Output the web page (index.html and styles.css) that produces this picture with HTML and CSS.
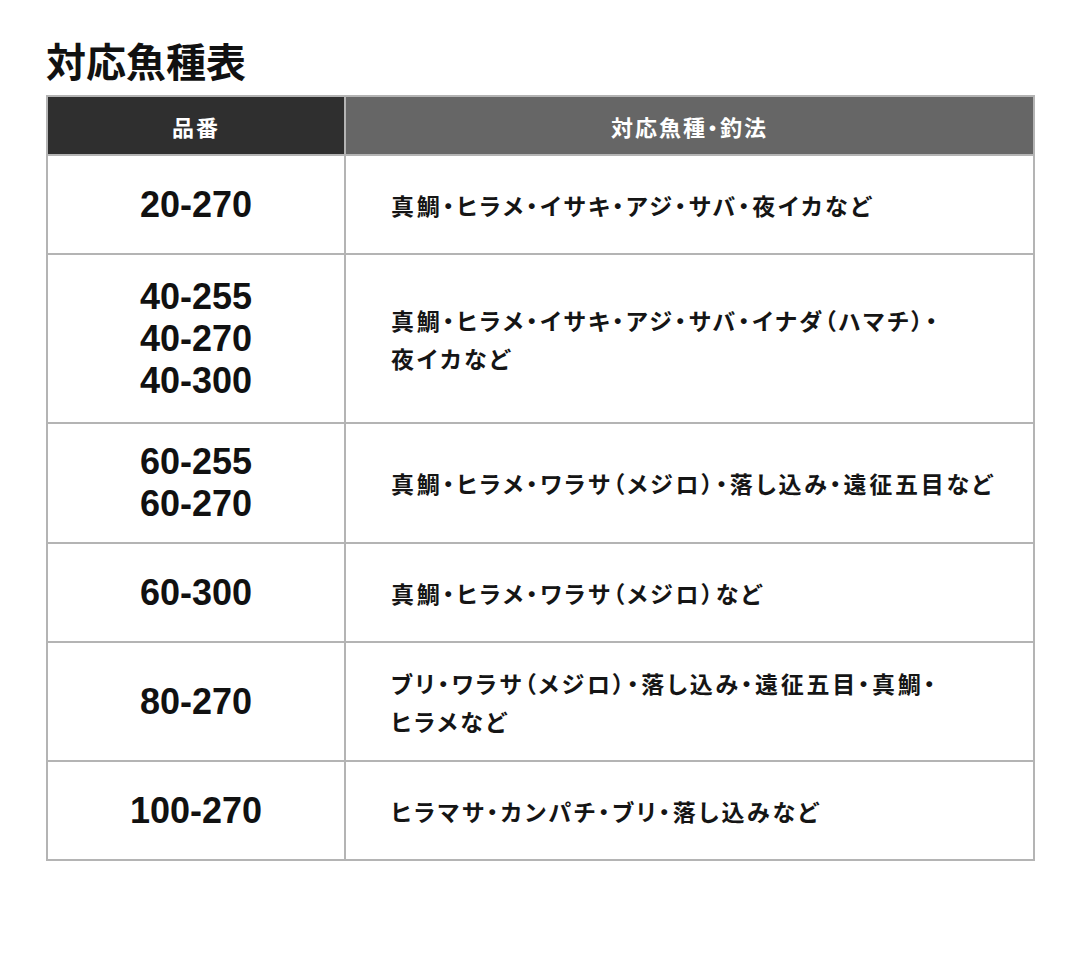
FILE: index.html
```html
<!DOCTYPE html>
<html lang="ja">
<head>
<meta charset="utf-8">
<title>対応魚種表</title>
<link rel="stylesheet" href="styles.css">
</head>
<body>
<main class="page">
  <h1 class="title">対応魚種表</h1>
  <table class="spec">
    <thead>
      <tr>
        <th class="h-model">品番</th>
        <th class="h-fish">対応魚種・釣法</th>
      </tr>
    </thead>
    <tbody>
      <tr>
        <td class="model">20-270</td>
        <td class="fish">真鯛・ヒラメ・イサキ・アジ・サバ・夜イカなど</td>
      </tr>
      <tr>
        <td class="model">40-255<br>40-270<br>40-300</td>
        <td class="fish">真鯛・ヒラメ・イサキ・アジ・サバ・イナダ（ハマチ）・<br>夜イカなど</td>
      </tr>
      <tr class="row-compact">
        <td class="model">60-255<br>60-270</td>
        <td class="fish">真鯛・ヒラメ・ワラサ（メジロ）・落し込み・遠征五目など</td>
      </tr>
      <tr>
        <td class="model">60-300</td>
        <td class="fish">真鯛・ヒラメ・ワラサ（メジロ）など</td>
      </tr>
      <tr>
        <td class="model">80-270</td>
        <td class="fish">ブリ・ワラサ（メジロ）・落し込み・遠征五目・真鯛・<br>ヒラメなど</td>
      </tr>
      <tr>
        <td class="model">100-270</td>
        <td class="fish">ヒラマサ・カンパチ・ブリ・落し込みなど</td>
      </tr>
    </tbody>
  </table>
</main>
</body>
</html>
```

FILE: styles.css
```css
html, body {
  margin: 0;
  padding: 0;
  background: #ffffff;
}

body {
  font-family: "Noto Sans CJK JP", "Noto Sans", sans-serif;
  color: #111111;
}

.page {
  padding: 34px 45px 0 46px;
}

.title {
  margin: 0 0 9px 0;
  font-size: 40px;
  line-height: 52px;
  font-weight: 700;
  color: #111111;
}

.spec {
  width: 100%;
  border-collapse: collapse;
  table-layout: fixed;
}

.spec th,
.spec td {
  border: 2px solid #b4b4b4;
}

.spec th {
  height: 57px;
  padding: 0;
  color: #ffffff;
  font-size: 22px;
  font-weight: 700;
  text-align: center;
  vertical-align: middle;
  font-feature-settings: "palt";
  letter-spacing: 2px;
}

.h-model {
  width: 296px;
  background: #2f2f2f;
}

.h-fish {
  background: #666666;
}

.spec td {
  height: 56px;
  padding: 21px 0 20px;
  vertical-align: middle;
}

.spec .row-compact td {
  padding-top: 17px;
  padding-bottom: 17px;
}

.model {
  text-align: center;
  font-family: "Liberation Sans", "Noto Sans CJK JP", sans-serif;
  font-weight: 700;
  font-size: 36px;
  line-height: 42px;
  color: #111111;
}

.spec .fish {
  padding-left: 45px;
  font-size: 23px;
  line-height: 38px;
  font-weight: 700;
  color: #151515;
  font-feature-settings: "palt";
  letter-spacing: 2.7px;
}
```
